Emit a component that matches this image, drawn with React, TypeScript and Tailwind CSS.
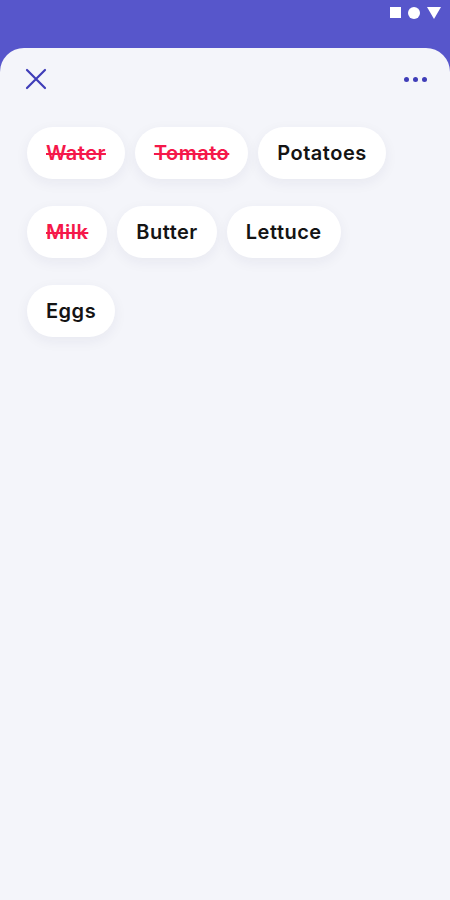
const items = [
  { name: "Water", done: true },
  { name: "Tomato", done: true },
  { name: "Potatoes", done: false },
  { name: "Milk", done: true },
  { name: "Butter", done: false },
  { name: "Lettuce", done: false },
  { name: "Eggs", done: false },
];

function Chip({ name, done }: { name: string; done: boolean }) {
  return (
    <div className="h-[52px] px-[19px] flex items-center rounded-full bg-white shadow-[0_4px_14px_rgba(30,40,90,0.06)]">
      <span
        className={
          done
            ? "text-[20px] font-semibold tracking-[0.5px] text-[#f5184a] line-through decoration-[1.5px]"
            : "text-[20px] font-semibold tracking-[0.5px] text-[#141414]"
        }
      >
        {name}
      </span>
    </div>
  );
}

export default function App() {
  return (
    <div className="w-[450px] h-[900px] bg-[#5756cb] flex flex-col" style={{ fontFamily: "Inter, 'DejaVu Sans', sans-serif" }}>
      {/* status bar */}
      <div className="h-12 flex items-start justify-end gap-[7px] pt-[6px] pr-[9px]">
        <div className="w-[11px] h-[11px] bg-white mt-[1px]" />
        <div className="w-[12px] h-[12px] bg-white rounded-full mt-[0.5px]" />
        <svg width="14" height="12" viewBox="0 0 14 12" className="mt-[1px]">
          <path d="M0 0H14L7 12Z" fill="#fff" />
        </svg>
      </div>

      <div className="flex-1 bg-[#f4f5fa] rounded-t-[24px] px-[27px]">
        <div className="h-[79px] flex items-start justify-between pt-[20px]">
          <svg width="22" height="22" viewBox="0 0 22 22" className="-ml-[2px]">
            <path d="M2 2L20 20M20 2L2 20" stroke="#3f3db8" strokeWidth="2.2" strokeLinecap="round" />
          </svg>
          <div className="flex gap-[4px] mr-[-4px] mt-[9px]">
            <div className="w-[5px] h-[5px] rounded-full bg-[#3f3db8]" />
            <div className="w-[5px] h-[5px] rounded-full bg-[#3f3db8]" />
            <div className="w-[5px] h-[5px] rounded-full bg-[#3f3db8]" />
          </div>
        </div>

        <div className="flex flex-wrap gap-x-[10px] gap-y-[27px]">
          {items.map((it) => (
            <Chip key={it.name} name={it.name} done={it.done} />
          ))}
        </div>
      </div>
    </div>
  );
}
